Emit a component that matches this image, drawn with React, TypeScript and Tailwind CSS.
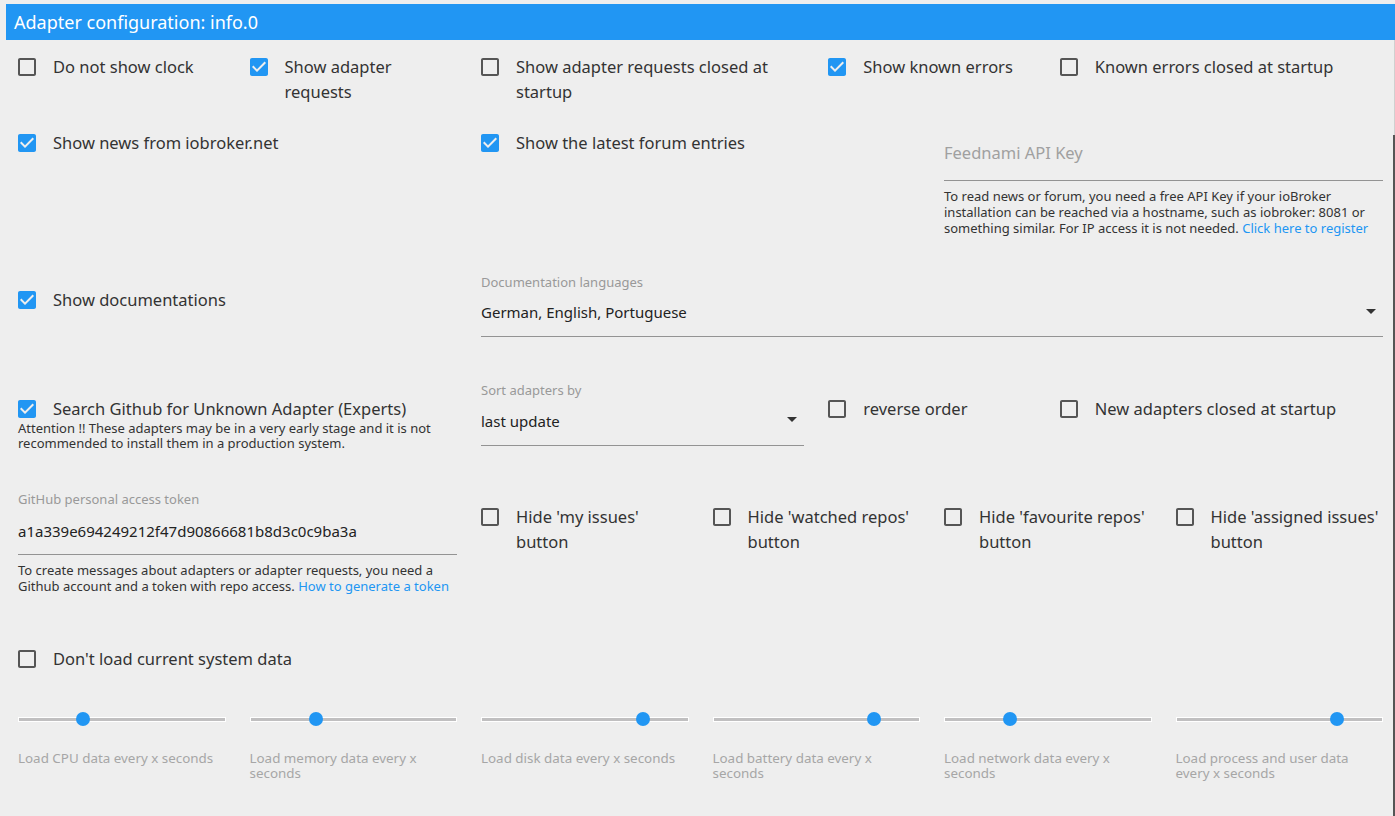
import React from "react";

const font = { fontFamily: '"Noto Sans", "Open Sans", sans-serif' };

type CheckProps = {
  label: React.ReactNode;
  checked?: boolean;
  className?: string;
  children?: React.ReactNode;
};

function Check({ label, checked, className, children }: CheckProps) {
  return (
    <div className={"px-3 " + (className ?? "")}>
      <div className="flex items-start">
        <svg viewBox="0 0 24 24" className="w-6 h-6 -ml-[3px] mt-[0.5px] shrink-0">
          {checked ? (
            <path
              fill="#2196f3"
              d="M19 3H5c-1.11 0-2 .9-2 2v14c0 1.1.89 2 2 2h14c1.11 0 2-.9 2-2V5c0-1.1-.89-2-2-2zm-9 14l-5-5 1.41-1.41L10 14.17l7.59-7.59L19 8l-9 9z"
            />
          ) : (
            <path
              fill="#555"
              d="M19 5v14H5V5h14m0-2H5c-1.1 0-2 .9-2 2v14c0 1.1.9 2 2 2h14c1.1 0 2-.9 2-2V5c0-1.1-.9-2-2-2z"
            />
          )}
        </svg>
        <span className="ml-[14px] text-[16.5px] leading-[25px] text-[#333]">{label}</span>
      </div>
      {children}
    </div>
  );
}

function Arrow() {
  return (
    <svg viewBox="0 0 24 24" className="w-6 h-6 absolute right-0 top-[9px]">
      <path fill="#333" d="M7 10l5 5 5-5z" />
    </svg>
  );
}

const sliders = [
  { label: "Load CPU data every x seconds", pos: 0.315 },
  { label: "Load memory data every x seconds", pos: 0.32 },
  { label: "Load disk data every x seconds", pos: 0.78 },
  { label: "Load battery data every x seconds", pos: 0.78 },
  { label: "Load network data every x seconds", pos: 0.32 },
  { label: "Load process and user data every x seconds", pos: 0.78 },
];

const hideButtons = ["my issues", "watched repos", "favourite repos", "assigned issues"];

export default function App() {
  return (
    <div className="relative w-[1395px] h-[816px] overflow-hidden bg-[#eeeeee] pt-1 pl-[6px]" style={font}>
      <div className="h-9 bg-[#2196f3] text-white text-[18px] leading-9 px-2">Adapter configuration: info.0</div>

      {/* row 1 */}
      <div className="grid grid-cols-12 mt-[14px] h-[76px]">
        <Check className="col-span-2" label="Do not show clock" />
        <Check className="col-span-2" checked label={<>Show adapter<br />requests</>} />
        <Check className="col-span-3" label={<>Show adapter requests closed at<br />startup</>} />
        <Check className="col-span-2" checked label="Show known errors" />
        <Check className="col-span-3" label="Known errors closed at startup" />
      </div>

      {/* row 2 */}
      <div className="grid grid-cols-12 h-[140px]">
        <Check className="col-span-4" checked label="Show news from iobroker.net" />
        <Check className="col-span-4" checked label="Show the latest forum entries" />
        <div className="col-span-4 px-3 pt-[11px]">
          <div className="text-[16.5px] leading-6 text-[#a0a0a0] pb-[15px] border-b border-[#939393]">Feednami API Key</div>
          <p className="mt-[7px] text-[13px] leading-4 text-[#333]">
            To read news or forum, you need a free API Key if your ioBroker installation can be reached via a hostname, such as iobroker: 8081 or something similar. For IP access it is not needed.{" "}
            <span className="text-[#2196f3]">Click here to register</span>
          </p>
        </div>
      </div>

      {/* row 3 */}
      <div className="grid grid-cols-12 h-[112px]">
        <Check className="col-span-4 pt-[17px]" checked label="Show documentations" />
        <div className="col-span-8 px-3 pt-1">
          <div className="text-[13px] leading-4 text-[#999]">Documentation languages</div>
          <div className="relative pt-[10px] pb-3 border-b border-[#939393] text-[15px] leading-6 text-[#222]">
            German, English, Portuguese
            <Arrow />
          </div>
        </div>
      </div>

      {/* row 4 */}
      <div className="grid grid-cols-12 h-[109px]">
        <Check className="col-span-4 pt-[14px]" checked label="Search Github for Unknown Adapter (Experts)">
          <p className="text-[13px] leading-[15px] text-[#333]">
            Attention !! These adapters may be in a very early stage and it is not recommended to install them in a production system.
          </p>
        </Check>
        <div className="col-span-3 px-3">
          <div className="text-[13px] leading-4 text-[#999]">Sort adapters by</div>
          <div className="relative pt-[11px] pb-3 border-b border-[#939393] text-[15px] leading-6 text-[#222]">
            last update
            <Arrow />
          </div>
        </div>
        <Check className="col-span-2 pt-[14px]" label="reverse order" />
        <Check className="col-span-3 pt-[14px]" label="New adapters closed at startup" />
      </div>

      {/* row 5 */}
      <div className="grid grid-cols-12 h-[155px]">
        <div className="col-span-4 px-3">
          <div className="text-[13px] leading-4 text-[#999]">GitHub personal access token</div>
          <div className="pt-3 pb-[11px] border-b border-[#939393] text-[15px] leading-6 text-[#222]">
            a1a339e694249212f47d90866681b8d3c0c9ba3a
          </div>
          <p className="mt-[7px] text-[13px] leading-4 text-[#333]">
            To create messages about adapters or adapter requests, you need a Github account and a token with repo access.{" "}
            <span className="text-[#2196f3]">How to generate a token</span>
          </p>
        </div>
        {hideButtons.map((b) => (
          <Check key={b} className="col-span-2 pt-[13px]" label={<>Hide '{b}'<br />button</>} />
        ))}
      </div>

      {/* row 6 */}
      <div className="grid grid-cols-12 h-[66px]">
        <Check className="col-span-4" label="Don't load current system data" />
      </div>

      {/* row 7 */}
      <div className="grid grid-cols-12">
        {sliders.map((s) => (
          <div key={s.label} className="col-span-2 px-3">
            <div className="relative h-[14px] flex items-center">
              <div className="w-full h-[5px] bg-[#c0bfc0] border border-white" />
              <div
                className="absolute top-0 w-[14px] h-[14px] -ml-[7px] rounded-full bg-[#2196f3]"
                style={{ left: `${s.pos * 100}%` }}
              />
            </div>
            <div className="mt-[25px] text-[13.4px] leading-[15px] text-[#a6a6a6]">{s.label}</div>
          </div>
        ))}
      </div>

      {/* scrollbar edge */}
      <div className="absolute right-0 top-[40px] h-[95px] w-px bg-[#d0d0d0]" />
      <div className="absolute right-0 top-[135px] bottom-0 w-[2px] bg-[#555]" />
    </div>
  );
}
